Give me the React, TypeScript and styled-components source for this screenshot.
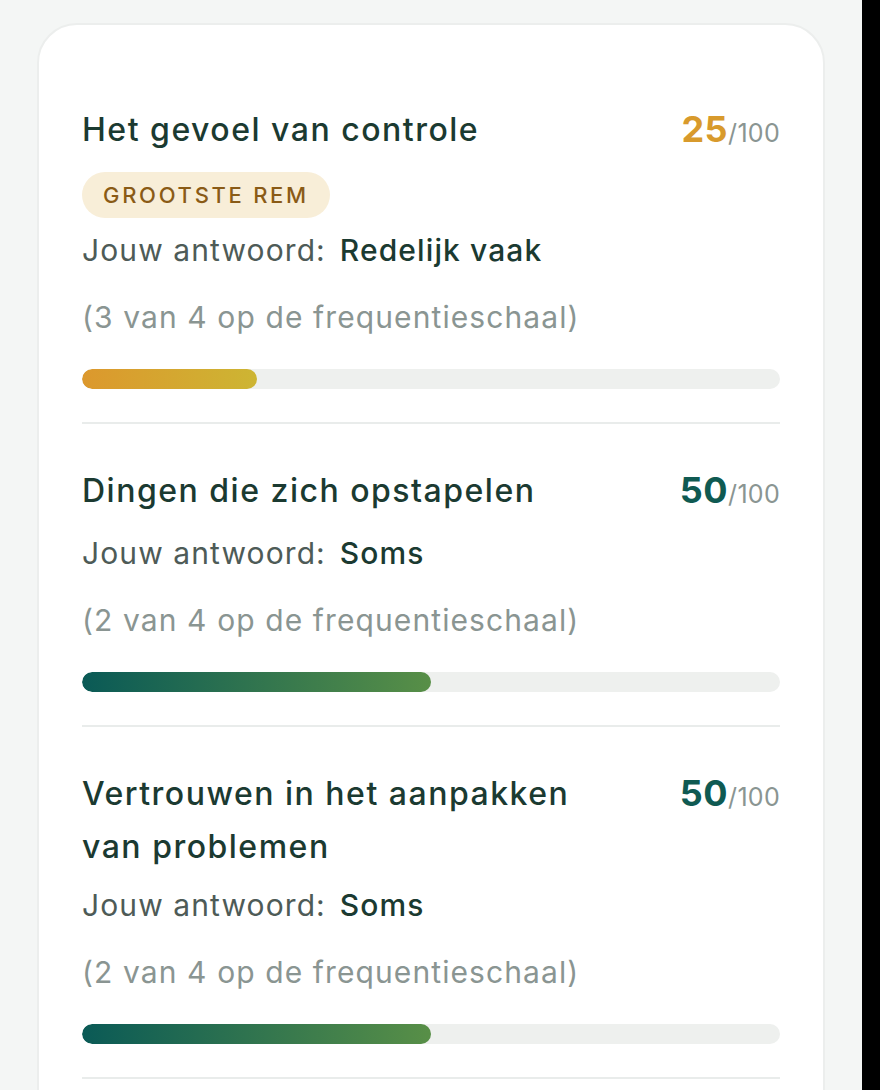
import React from 'react';
import styled, { createGlobalStyle } from 'styled-components';

const GlobalStyle = createGlobalStyle`
  html, body {
    margin: 0;
    padding: 0;
    background: #f4f6f5;
    font-family: Inter, "Noto Sans", sans-serif;
  }
`;

interface Item {
  title: string;
  score: number;
  answer: string;
  step: number;
  badge?: string;
}

const items: Item[] = [
  { title: 'Het gevoel van controle', score: 25, answer: 'Redelijk vaak', step: 3, badge: 'GROOTSTE REM' },
  { title: 'Dingen die zich opstapelen', score: 50, answer: 'Soms', step: 2 },
  { title: 'Vertrouwen in het aanpakken van problemen', score: 50, answer: 'Soms', step: 2 },
];

const Page = styled.div`
  display: flex;
  height: 1090px;
  overflow: hidden;
`;

const Main = styled.div`
  flex: 1;
  padding: 23px 37px 0 37px;
`;

const Edge = styled.div`
  width: 18px;
  background: #000;
`;

const Card = styled.div`
  background: #fff;
  border: 2px solid #eceeed;
  border-radius: 40px;
  padding: 78px 43px 40px 43px;
  min-height: 1200px;
`;

const Row = styled.div<{ $first?: boolean }>`
  padding-top: ${(p) => (p.$first ? '0' : '40px')};
  padding-bottom: 33px;
  border-bottom: 2px solid #e9eceb;
`;

const Header = styled.div`
  display: flex;
  justify-content: space-between;
  align-items: flex-start;
  gap: 24px;
`;

const Title = styled.h2`
  margin: 0;
  max-width: 545px;
  font-size: 32px;
  font-weight: 500;
  line-height: 53px;
  color: #1b3a31;
  letter-spacing: 1.5px;
`;

const Score = styled.div<{ $low?: boolean }>`
  white-space: nowrap;
  line-height: 53px;
  font-size: 36px;
  font-weight: 700;
  letter-spacing: 0.5px;
  color: ${(p) => (p.$low ? '#d89a2c' : '#0f5a52')};
`;

const Max = styled.span`
  font-size: 25px;
  font-weight: 400;
  letter-spacing: 0.3px;
  color: #8a9592;
`;

const Badge = styled.div`
  width: fit-content;
  margin-top: 12px;
  height: 46px;
  line-height: 46px;
  padding: 0 21px;
  border-radius: 23px;
  background: #f8eed8;
  color: #8a5b16;
  font-size: 22px;
  font-weight: 500;
  letter-spacing: 2.7px;
`;

const Answer = styled.div`
  margin-top: 8px;
  line-height: 48px;
  font-size: 30px;
  letter-spacing: 1.1px;
  color: #4e5b57;
`;

const AnswerValue = styled.span`
  margin-left: 14px;
  font-weight: 500;
  color: #1b3a31;
`;

const Scale = styled.div`
  margin-top: 19px;
  line-height: 48px;
  font-size: 30px;
  letter-spacing: 1.1px;
  color: #8a9592;
`;

const Track = styled.div`
  margin-top: 28px;
  height: 20px;
  border-radius: 10px;
  background: #eef0ee;
  overflow: hidden;
`;

const Fill = styled.div<{ $low?: boolean }>`
  height: 100%;
  border-radius: 10px;
  background: ${(p) =>
    p.$low
      ? 'linear-gradient(90deg, #dc982d, #cdb533)'
      : 'linear-gradient(90deg, #0a5a56, #588f47)'};
`;

export default function App() {
  return (
    <>
      <GlobalStyle />
      <Page>
        <Main>
          <Card>
            {items.map((item, i) => {
              const low = item.score < 50;
              return (
                <Row key={item.title} $first={i === 0}>
                  <Header>
                    <Title>{item.title}</Title>
                    <Score $low={low}>
                      {item.score}
                      <Max>/100</Max>
                    </Score>
                  </Header>
                  {item.badge && <Badge>{item.badge}</Badge>}
                  <Answer>
                    Jouw antwoord:<AnswerValue>{item.answer}</AnswerValue>
                  </Answer>
                  <Scale>({item.step} van 4 op de frequentieschaal)</Scale>
                  <Track>
                    <Fill $low={low} style={{ width: `${item.score}%` }} />
                  </Track>
                </Row>
              );
            })}
          </Card>
        </Main>
        <Edge />
      </Page>
    </>
  );
}
